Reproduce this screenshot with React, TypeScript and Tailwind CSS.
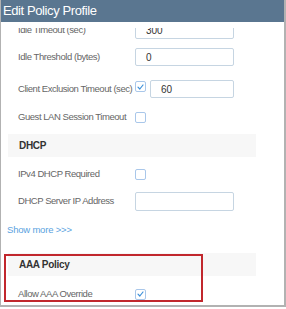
import type { ReactNode } from 'react'

const font = { fontFamily: '"Liberation Sans", Arial, sans-serif' }

function Checkbox({ checked }: { checked?: boolean }) {
    return (
        <span className="flex h-[11px] w-[11px] shrink-0 items-center justify-center rounded-[2px] border border-[#a9c7ea] bg-white">
            {checked && (
                <svg width="7" height="6" viewBox="0 0 7 6" fill="none">
                    <path d="M1 3.2 L2.8 5 L6 1" stroke="#3b8fd9" strokeWidth="1.2" strokeLinecap="round" strokeLinejoin="round" />
                </svg>
            )}
        </span>
    )
}

function TextBox({ value, className = 'w-[99px]', h = 'h-[18px]' }: { value?: string; className?: string; h?: string }) {
    return (
        <div className={`${className} ${h} flex items-center rounded-[2px] border border-[#c6d5e2] bg-white pl-[10px] text-[10px] text-[#333]`}>
            {value}
        </div>
    )
}

function Row({ label, mt, h = 'h-[18px]', children }: { label: string; mt: string; h?: string; children: ReactNode }) {
    return (
        <div className={`flex ${h} ${mt} items-center`}>
            <span className="w-[134px] shrink-0 whitespace-nowrap pl-[17px] text-[9.5px] tracking-[-0.45px] text-[#666]">{label}</span>
            {children}
        </div>
    )
}

function Section({ title, mt }: { title: string; mt: string }) {
    return (
        <div className={`${mt} ml-[7px] flex h-[23px] w-[248px] items-center bg-[#f7f7f7] pl-[11px] text-[10px] font-bold tracking-[-0.3px] text-[#333]`}>
            {title}
        </div>
    )
}

export default function App() {
    return (
        <div className="relative h-[309px] w-[286px] bg-white" style={font}>
            <div className="flex h-[307px] w-[286px] flex-col border-b-2 border-l border-r-2 border-[#b2b2b2]">
                <div className="flex h-[22px] shrink-0 items-center bg-[#5a7690] pl-[2px] text-[13px] tracking-[-0.4px] text-white">
                    Edit Policy Profile
                </div>
                <div className="mt-[6px] flex-1 overflow-hidden">
                    <div className="-mt-[7px] flex flex-col">
                        <Row label="Idle Timeout (sec)" mt="mt-0">
                            <TextBox value="300" />
                        </Row>
                        <Row label="Idle Threshold (bytes)" mt="mt-[9px]">
                            <TextBox value="0" />
                        </Row>
                        <Row label="Client Exclusion Timeout (sec)" mt="mt-[14px]">
                            <div className="flex h-full items-start gap-[4px] pt-[1px]">
                                <Checkbox checked />
                                <TextBox value="60" className="-mt-[1px] w-[84px]" />
                            </div>
                        </Row>
                        <Row label="Guest LAN Session Timeout" mt="mt-[10px]">
                            <Checkbox />
                        </Row>
                        <Section title="DHCP" mt="mt-[8px]" />
                        <Row label="IPv4 DHCP Required" mt="mt-[8px]">
                            <Checkbox />
                        </Row>
                        <Row label="DHCP Server IP Address" mt="mt-[9px]" h="h-[19px]">
                            <TextBox h="h-[19px]" />
                        </Row>
                        <a className="mt-[12px] flex h-[14px] items-center pl-[6px] text-[9.5px] tracking-[-0.2px] text-[#5aa2e0]">
                            Show more &gt;&gt;&gt;
                        </a>
                        <Section title="AAA Policy" mt="mt-[16px]" />
                        <Row label="Allow AAA Override" mt="mt-[9px]">
                            <Checkbox checked />
                        </Row>
                    </div>
                </div>
            </div>
            <div className="absolute left-[4px] top-[254px] h-[48px] w-[199px] border-2 border-[#c1272d]" />
        </div>
    )
}
